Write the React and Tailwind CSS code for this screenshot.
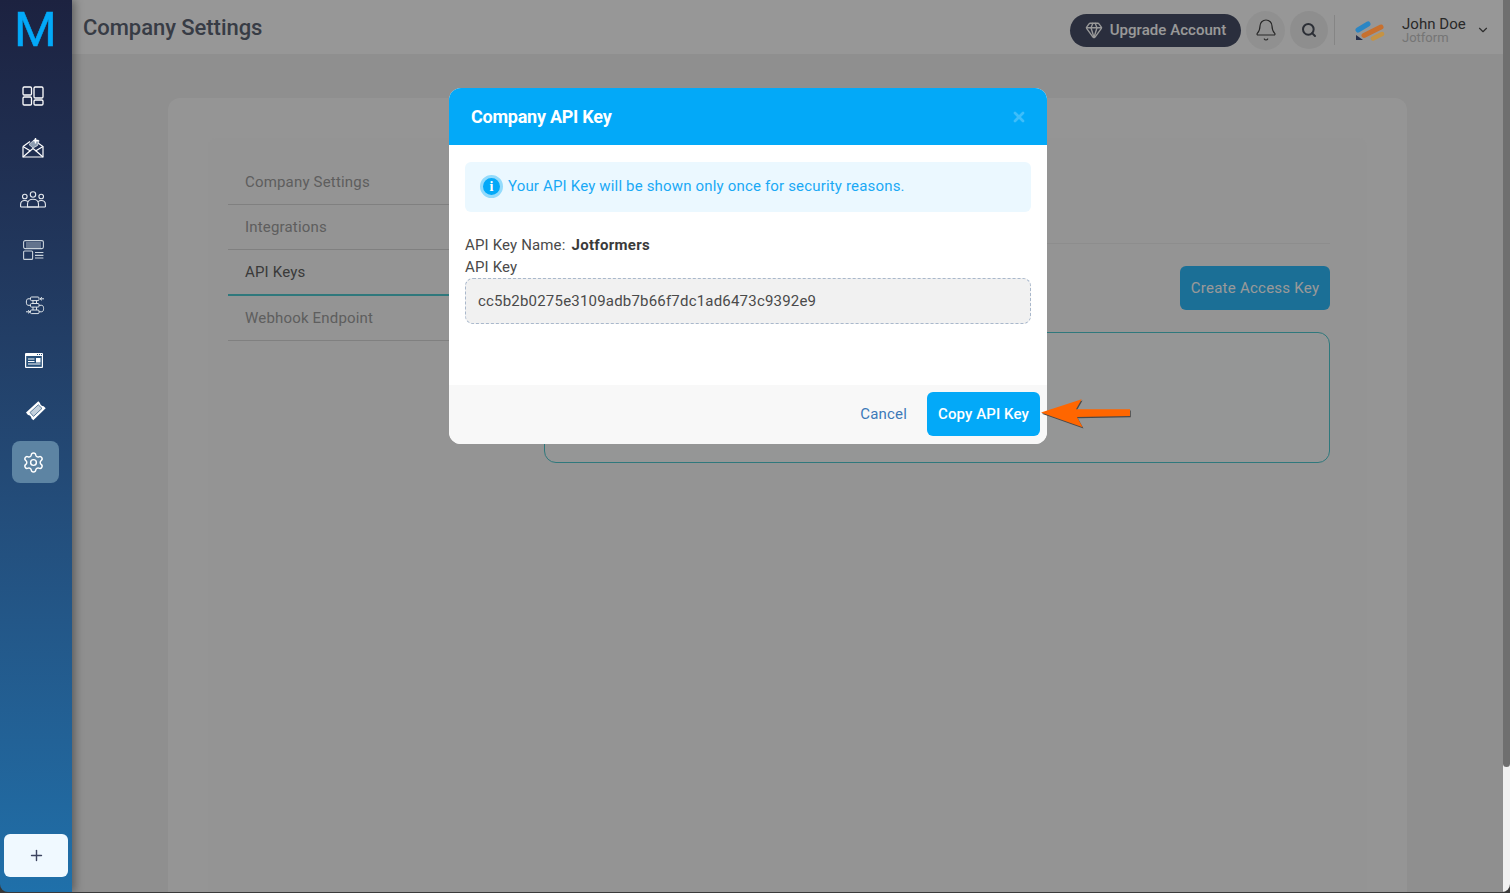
import { Bell, ChevronDown, Gem, Plus, Search, Settings, X } from 'lucide-react';

const DashboardIcon = () => (
  <svg width="22" height="20" viewBox="0 0 22 20" fill="none" stroke="#fff" strokeWidth="1.3">
    <rect x="1" y="1" width="8.5" height="8" rx="1.2" />
    <rect x="1" y="11" width="8.5" height="8" rx="1.2" />
    <rect x="12" y="1" width="9" height="11" rx="1.2" />
    <rect x="12" y="14" width="9" height="5" rx="1.2" />
  </svg>
);

const MailIcon = () => (
  <svg width="22" height="20" viewBox="0 0 22 20" fill="none" stroke="#fff" strokeWidth="1.2">
    <path d="M1 8.500V19H21V8.500L16 5" />
    <path d="M1 8.500L8 3.500" />
    <path d="M1 19L8.500 12.500L11 10.500L13.500 12.500L21 19" />
    <path d="M1 8.500L8.500 13M21 8.500L13.500 13" />
    <path d="M7 6.500L12.500 1.500L17 2.500L15.500 7.500L11 10Z" fill="#8c9cb0" stroke="#dfe5ea" strokeWidth=".8" />
    <path d="M13.500 0V5.500M11.500 2.800H16.500" strokeWidth="1.400" />
  </svg>
);

const PeopleIcon = () => (
  <svg width="26" height="17" viewBox="0 0 26 17" fill="none" stroke="#e5e9ee" strokeWidth="1.1">
    <circle cx="13" cy="3.5" r="2.7" />
    <circle cx="4.8" cy="5.5" r="2.3" />
    <circle cx="21.2" cy="5.5" r="2.3" />
    <path d="M7.5 16V13C7.5 10 10 8.2 13 8.2S18.500 10 18.500 13V16Z" />
    <path d="M.6 16V13.500C.6 11 2.500 9.500 4.800 9.500C6 9.500 7 9.900 7.800 10.600" />
    <path d="M25.400 16V13.500C25.400 11 23.500 9.500 21.200 9.500C20 9.500 19 9.900 18.200 10.600" />
    <path d="M.6 16H25.400" />
  </svg>
);

const LayoutIcon = () => (
  <svg width="21" height="20" viewBox="0 0 21 20" fill="none" stroke="#c9d2db" strokeWidth="1.1">
    <rect x=".6" y=".6" width="19.800" height="8" rx="1.500" />
    <path d="M3 3H18M3 5H18M3 7H18" strokeWidth=".8" />
    <rect x=".6" y="11" width="9" height="8.400" rx="1" />
    <path d="M12 12.500H20.400M12 15.300H20.400M12 18H20.400" strokeWidth="1.200" />
  </svg>
);

const ProcessIcon = () => (
  <svg width="20" height="19" viewBox="0 0 20 19" fill="none" stroke="#dfe5ea" strokeWidth="1">
    <rect x="5.500" y="1" width="8.500" height="3.600" rx="1" />
    <rect x="5.500" y="7.500" width="8.500" height="3.600" rx="1" />
    <rect x="5.500" y="14" width="8.500" height="3.600" rx="1" />
    <path d="M8 4.600V7.500M11.500 4.600V7.500M8 11.100V14M11.500 11.100V14" />
    <path d="M5.500 2.800H3C.8 2.800.8 9.300 3 9.300H5.500" />
    <path d="M14 9.300H16.800C19.200 9.300 19.200 15.800 16.800 15.800H14" />
    <path d="M15 2.800H19M17 1.300L15 2.800L17 4.300" />
    <path d="M5 15.800H1M3 14.300L5 15.800L3 17.300" />
  </svg>
);

const WindowIcon = () => (
  <svg width="18" height="15" viewBox="0 0 18 15">
    <rect width="18" height="15" rx="1" fill="#fff" />
    <rect x="1.200" y="3" width="15.600" height="10.800" fill="#27507a" />
    <path d="M12 1.500H13M14 1.500H15M16 1.500H17" stroke="#27507a" strokeWidth="1" />
    <rect x="11" y="5" width="4.500" height="4.500" fill="#fff" />
    <path d="M3 6H9.500M3 8.500H9.500M3 11H15.500" stroke="#fff" strokeWidth="1" />
  </svg>
);

const TicketIcon = () => (
  <svg width="20" height="20" viewBox="0 0 20 20">
    <path
      d="M12.300 .3L14 2C14 3.500 16 5.300 17.700 5.300L19.700 7.300L7.300 19.300L5.500 17.500C5.500 15.800 3.700 14 2 14L0 11.500Z"
      fill="#fff"
    />
    <path d="M12.300 3.800L16 7.400L7.500 15.400L4 11.500Z" fill="#c3d0dc" stroke="#27507a" strokeWidth=".7" />
  </svg>
);

const CompanyLogo = () => (
  <svg width="30" height="21" viewBox="0 0 30 21" fill="none" strokeLinecap="round">
    <path d="M3 10L13 4" stroke="#2b86c4" strokeWidth="5" />
    <path d="M9 15.500L26 7" stroke="#c8702e" strokeWidth="5" />
    <path d="M18 18.500L27 14" stroke="#c59344" strokeWidth="4.500" />
    <path d="M1 15L8 20H1Z" fill="#27304a" />
  </svg>
);

const NavItem = ({ className, children }) => (
  <div className={`flex items-center justify-center ${className}`}>{children}</div>
);

const tabs = [
  { label: 'Company Settings', className: 'h-[45px] border-b border-[#d6d6d6] text-[#9d9d9d]' },
  { label: 'Integrations', className: 'h-[45px] border-b border-[#d6d6d6] text-[#9d9d9d]' },
  { label: 'API Keys', className: 'h-[46px] border-b-2 border-[#4fc9cf] text-[#616161]' },
  { label: 'Webhook Endpoint', className: 'h-[45px] border-b border-[#d6d6d6] text-[#9d9d9d]' },
];

const Sidebar = () => (
  <aside className="relative z-20 flex w-[72px] shrink-0 flex-col rounded-bl-lg bg-gradient-to-b from-[#1c2240] to-[#1f70aa] shadow-[3px_0_9px_rgba(0,0,0,0.35)]">
    <div className="flex h-[70px] items-start justify-center pr-[1px] text-[49px] leading-[60px] text-[#03a9f8] [-webkit-text-stroke:0.5px_#03a9f8]">
      M
    </div>
    <NavItem className="h-[52px] pr-[6px]"><DashboardIcon /></NavItem>
    <NavItem className="h-[52px] pr-[6px]"><MailIcon /></NavItem>
    <NavItem className="h-[51px] pr-[6px]"><PeopleIcon /></NavItem>
    <NavItem className="h-[52px] pb-[2px] pr-[6px]"><LayoutIcon /></NavItem>
    <NavItem className="h-[56px] pr-[2px]"><ProcessIcon /></NavItem>
    <NavItem className="h-[53px] pt-[2px] pr-[5px]"><WindowIcon /></NavItem>
    <NavItem className="h-[50px]"><TicketIcon /></NavItem>
    <div className="mx-3 mt-[5px] flex h-[42px] w-[47px] items-center justify-center rounded-lg bg-[#5d84a3] pr-[5px]">
      <Settings size={23} strokeWidth={1.5} className="text-white" />
    </div>
    <div className="flex-1" />
    <button className="mx-1 mb-[15px] flex h-[43px] w-[64px] items-center justify-center rounded-md bg-[#f0f9ff] text-[#3d4560]">
      <Plus size={17} strokeWidth={2} />
    </button>
  </aside>
);

const Header = () => (
  <header className="flex h-[54px] shrink-0 items-center bg-[#fcfcfc] pl-[11px] pr-[13px]">
    <h1 className="text-[22px] font-medium tracking-[-0.05px] text-[#5c6473]">Company Settings</h1>
    <div className="ml-auto flex items-center pt-[6px]">
      <button className="flex h-[33px] w-[171px] items-center justify-center gap-[7px] rounded-full bg-[#474e66] text-[15px] font-medium tracking-[0.05px] text-white">
        <Gem size={18} strokeWidth={1.8} />
        Upgrade Account
      </button>
      <div className="ml-[5px] flex h-[39px] w-[39px] items-center justify-center rounded-full bg-[#f1f1f1] text-[#444444]">
        <Bell size={24} strokeWidth={1.2} />
      </div>
      <div className="ml-[5px] flex h-[38px] w-[38px] items-center justify-center rounded-full bg-[#ededed] text-[#4a4f5a]">
        <Search size={16} strokeWidth={3} />
      </div>
      <div className="ml-[6px] h-[30px] w-px bg-[#dedede]" />
      <div className="relative z-20 ml-[20px]"><CompanyLogo /></div>
      <div className="ml-[17px] mt-[1px] w-[70px] leading-none">
        <div className="text-[15px] leading-[15px] tracking-[0.05px] text-[#454545]">John Doe</div>
        <div className="-mt-[1px] text-[13px] leading-[14px] text-[#c4c4c4]">Jotform</div>
      </div>
      <ChevronDown size={14} strokeWidth={2} className="ml-[4px] text-[#4d4d4d]" />
    </div>
  </header>
);

const Settingsbody = () => (
  <div className="flex-1 bg-[#eeeeee] px-24 pt-[44px]">
    <div className="h-full rounded-t-xl bg-[#f8f8f8] pr-[40px] pt-[40px] pl-[40px]">
      <div className="flex h-full rounded-t-lg bg-[#f7f7f7] pl-[20px] pr-[37px] pt-[22px]">
        <div className="w-[296px] shrink-0 text-[15px] tracking-[0.18px]">
          {tabs.map((tab) => (
            <div key={tab.label} className={`flex items-center pl-[17px] ${tab.className}`}>
              {tab.label}
            </div>
          ))}
        </div>
        <div className="ml-[20px] flex-1">
          <div className="h-[84px] border-b border-[#ebebeb]" />
          <div className="mt-[22px] flex justify-end">
            <button className="h-[44px] w-[150px] rounded-md bg-[#2db9fa] text-[15px] tracking-[0.25px] text-white">
              Create Access Key
            </button>
          </div>
          <div className="mt-[22px] h-[131px] rounded-xl border border-[#4fc9cf] bg-[#f8fafa]" />
        </div>
      </div>
    </div>
  </div>
);

const ApiKeyModal = () => (
  <div className="absolute left-[377px] top-[88px] z-20 flex h-[356px] w-[598px] flex-col overflow-hidden rounded-xl bg-white">
    <div className="flex h-[57px] shrink-0 items-center justify-between bg-[#03a9f8] pl-[22px] pr-[20px]">
      <h2 className="text-[18px] font-bold tracking-[-0.25px] text-white">Company API Key</h2>
      <X size={16} strokeWidth={4} className="text-[#3dbdfa]" />
    </div>
    <div className="flex-1 px-4 pt-[17px]">
      <div className="flex h-[50px] items-center rounded-md bg-[#ebf8ff] pb-[1px] pl-[15px] text-[15px] tracking-[0.17px] text-[#1aa9f5]">
        <span className="flex h-[23px] w-[23px] items-center justify-center rounded-full border-[3px] border-[#93dbfc] bg-[#03a9f8] font-['Liberation_Serif',serif] text-[14px] font-bold leading-none text-white">
          i
        </span>
        <span className="ml-[5px]">Your API Key will be shown only once for security reasons.</span>
      </div>
      <div className="mt-[22px] flex h-[22px] items-center text-[15px] tracking-[0.15px] text-[#4a4a4a]">
        API Key Name:
        <span className="ml-[6px] font-bold tracking-[0.3px] text-[#3a3a3a]">Jotformers</span>
      </div>
      <div className="h-[22px] text-[15px] leading-[22px] tracking-[0.15px] text-[#4a4a4a]">API Key</div>
      <div className="flex h-[46px] items-center rounded-lg border border-dashed border-[#a9b8cc] bg-[#f1f1f1] pl-3 text-[15px] tracking-[0.2px] text-[#4a4a4a]">
        cc5b2b0275e3109adb7b66f7dc1ad6473c9392e9
      </div>
    </div>
    <div className="flex h-[59px] shrink-0 items-start justify-end bg-[#f8f8f8] pr-[7px] pt-[7px]">
      <button className="mr-[20px] h-[44px] text-[15px] tracking-[0.18px] text-[#3d7ab8]">Cancel</button>
      <button className="h-[44px] w-[113px] rounded-md bg-[#03a9f8] text-[15px] font-medium tracking-[0.08px] text-white">
        Copy API Key
      </button>
    </div>
  </div>
);

const Arrow = () => (
  <svg className="absolute left-[968px] top-[397px] z-30" width="92" height="34" viewBox="0 0 92 34">
    <path
      d="M1 15.600L41.700 2.300L36 12.300L90 12.300V19L37 20L42.700 30.300Z"
      fill="#4a4a4a"
      transform="translate(0.8 1.200)"
    />
    <path d="M1 15.600L41.700 2.300L36 12.300L90 12.300V19L37 20L42.700 30.300Z" fill="#ff6600" />
  </svg>
);

const Scrollbar = () => (
  <div className="flex w-[7px] shrink-0 flex-col bg-[#f1f1f1]">
    <div className="h-[767px] rounded-b-sm bg-[#6f6f6f]" />
  </div>
);

export default function App() {
  return (
    <div className="h-screen w-full overflow-hidden bg-[#3a3a3a] font-['Roboto',sans-serif]">
      <div className="flex h-[892px] overflow-hidden rounded-br-lg">
        <Sidebar />
        <main className="relative flex min-w-0 flex-1 flex-col">
          <Header />
          <Settingsbody />
          <div className="absolute inset-0 z-10 bg-black/40" />
          <ApiKeyModal />
          <Arrow />
        </main>
        <Scrollbar />
      </div>
    </div>
  );
}
